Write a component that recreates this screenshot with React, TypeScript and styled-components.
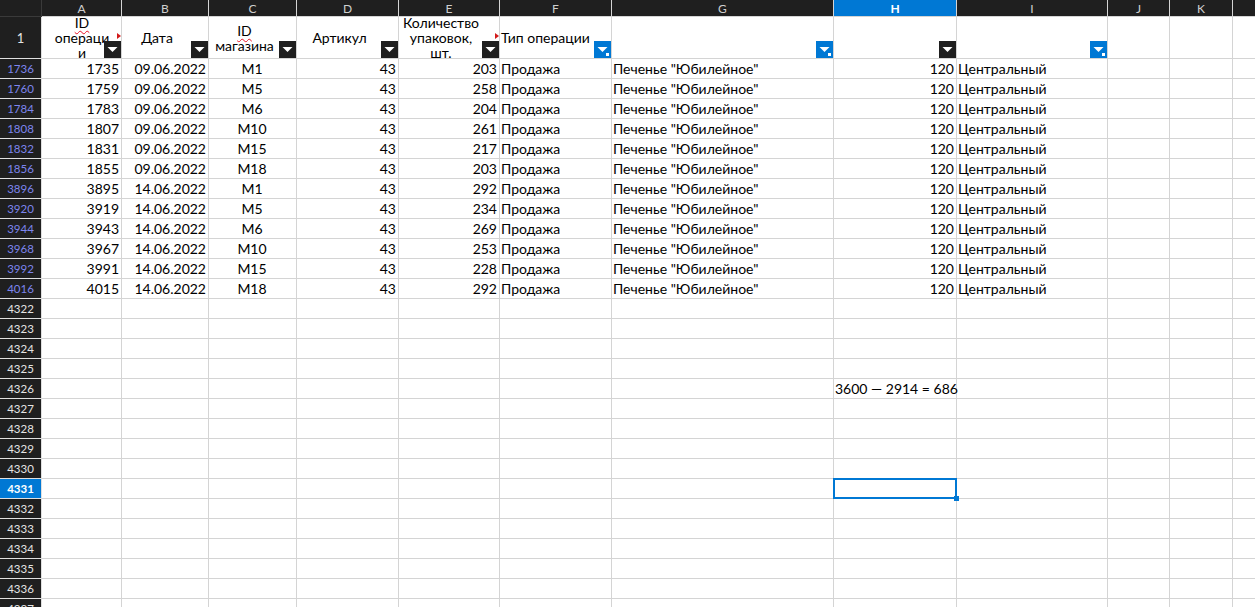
import React from 'react';
import styled, { createGlobalStyle, css } from 'styled-components';

const COLS = '42px 80px 87px 88px 102px 101px 112px 222px 123px 151px 62px 63px 80px';
const LETTERS = ['A', 'B', 'C', 'D', 'E', 'F', 'G', 'H', 'I', 'J', 'K', ''];

type Align = 'left' | 'center' | 'right';

const data: [number, number, string, string, number][] = [
  [1736, 1735, '09.06.2022', 'М1', 203],
  [1760, 1759, '09.06.2022', 'М5', 258],
  [1784, 1783, '09.06.2022', 'М6', 204],
  [1808, 1807, '09.06.2022', 'М10', 261],
  [1832, 1831, '09.06.2022', 'М15', 217],
  [1856, 1855, '09.06.2022', 'М18', 203],
  [3896, 3895, '14.06.2022', 'М1', 292],
  [3920, 3919, '14.06.2022', 'М5', 234],
  [3944, 3943, '14.06.2022', 'М6', 269],
  [3968, 3967, '14.06.2022', 'М10', 253],
  [3992, 3991, '14.06.2022', 'М15', 228],
  [4016, 4015, '14.06.2022', 'М18', 292],
];

const emptyRows = Array.from({ length: 16 }, (_, i) => 4322 + i);

function App() {
  return (
    <>
      <GlobalStyle />
      <Sheet>
        <GridRow $h={17}>
          <Corner />
          {LETTERS.map((l) => (
            <ColHead key={l || 'L'} $active={l === 'H'}>
              {l}
            </ColHead>
          ))}
        </GridRow>

        <GridRow $h={42}>
          <RowHead $tone="plain" $big>
            1
          </RowHead>
          <HeadCell $pad={0}>
            <Label>
              <Spell>ID</Spell>
              <br />
              операци
              <br />и
            </Label>
            <Overflow />
            <FilterButton />
          </HeadCell>
          <HeadCell $pad={17}>
            <Label>Дата</Label>
            <FilterButton />
          </HeadCell>
          <HeadCell $pad={17}>
            <Label>
              <Spell>ID</Spell>
              <br />
              магазина
            </Label>
            <FilterButton />
          </HeadCell>
          <HeadCell $pad={17}>
            <Label>Артикул</Label>
            <FilterButton />
          </HeadCell>
          <HeadCell $pad={17}>
            <Label>
              Количество
              <br />
              упаковок,
              <br />
              шт.
            </Label>
            <Overflow />
            <FilterButton />
          </HeadCell>
          <HeadCell $pad={17} $align="left">
            <Label>Тип операции</Label>
            <FilterButton filtered />
          </HeadCell>
          <HeadCell $pad={17}>
            <FilterButton filtered />
          </HeadCell>
          <HeadCell $pad={17}>
            <FilterButton />
          </HeadCell>
          <HeadCell $pad={17}>
            <FilterButton filtered />
          </HeadCell>
          <HeadCell $pad={0} />
          <HeadCell $pad={0} />
          <HeadCell $pad={0} />
        </GridRow>

        {data.map(([row, id, date, shop, qty]) => (
          <GridRow key={row} $h={20}>
            <RowHead $tone="filtered">{row}</RowHead>
            <Cell $align="right">{id}</Cell>
            <Cell $align="right">{date}</Cell>
            <Cell $align="center">{shop}</Cell>
            <Cell $align="right">43</Cell>
            <Cell $align="right">{qty}</Cell>
            <Cell>Продажа</Cell>
            <Cell>Печенье "Юбилейное"</Cell>
            <Cell $align="right">120</Cell>
            <Cell>Центральный</Cell>
            <Cell />
            <Cell />
            <Cell />
          </GridRow>
        ))}

        {emptyRows.map((row) => (
          <GridRow key={row} $h={20}>
            <RowHead $tone={row === 4331 ? 'active' : 'plain'}>{row}</RowHead>
            {LETTERS.map((l) => (
              <Cell key={l || 'L'} $selected={row === 4331 && l === 'H'}>
                {row === 4326 && l === 'H' ? '3600 — 2914 = 686' : ''}
              </Cell>
            ))}
          </GridRow>
        ))}
      </Sheet>
    </>
  );
}

function FilterButton({ filtered }: { filtered?: boolean }) {
  return (
    <Filter $filtered={filtered}>
      <svg width="17" height="17" viewBox="0 0 17 17">
        <polygon points="3.5,6 13.5,6 8.5,11" fill="#fff" />
        {filtered && <rect x="12" y="12" width="3" height="3" fill="#fff" />}
      </svg>
    </Filter>
  );
}

export default App;

const GlobalStyle = createGlobalStyle`
  html, body {
    margin: 0;
    background: #fff;
    overflow: hidden;
  }
  body {
    font-family: Lato, "Noto Sans", sans-serif;
  }
`;

const Sheet = styled.div`
  width: 1255px;
  height: 607px;
  overflow: hidden;
  background: #fff;
  color: #000;
  font-size: 14px;
`;

const GridRow = styled.div<{ $h: number }>`
  display: grid;
  grid-template-columns: ${COLS};
  grid-template-rows: ${(p) => p.$h}px;
  height: ${(p) => p.$h}px;
  & > * {
    min-height: 0;
    min-width: 0;
    box-sizing: border-box;
  }
`;

const Corner = styled.div`
  background: #1f1f1f;
  border-right: 1px solid #3a3a3a;
  border-bottom: 1px solid #3a3a3a;
`;

const ColHead = styled.div<{ $active?: boolean }>`
  display: flex;
  align-items: center;
  justify-content: center;
  background: ${(p) => (p.$active ? '#0078d4' : '#1f1f1f')};
  color: ${(p) => (p.$active ? '#fff' : '#cfcfcf')};
  font-weight: ${(p) => (p.$active ? 700 : 400)};
  font-size: 12px;
  border-right: 1px solid #d4d4d4;
  border-bottom: 1px solid #d4d4d4;
`;

const toneColor = {
  filtered: '#7d85ee',
  plain: '#e4e4e4',
  active: '#fff',
};

const RowHead = styled.div<{ $tone: 'filtered' | 'plain' | 'active'; $big?: boolean }>`
  display: flex;
  align-items: center;
  justify-content: center;
  font-size: ${(p) => (p.$big ? 13 : 11.5)}px;
  background: ${(p) => (p.$tone === 'active' ? '#0078d4' : '#1f1f1f')};
  color: ${(p) => toneColor[p.$tone]};
  font-weight: ${(p) => (p.$tone === 'active' ? 700 : 400)};
  border-right: 1px solid #e0e0e0;
  border-bottom: 1px solid #e0e0e0;
`;

const Cell = styled.div<{ $align?: Align; $selected?: boolean }>`
  position: relative;
  display: flex;
  align-items: center;
  justify-content: ${(p) =>
    p.$align === 'right' ? 'flex-end' : p.$align === 'center' ? 'center' : 'flex-start'};
  padding: 0 2px 0 1px;
  white-space: nowrap;
  border-right: 1px solid #d4d4d4;
  border-bottom: 1px solid #d4d4d4;
  ${(p) =>
    p.$selected &&
    css`
      &::after {
        content: '';
        position: absolute;
        top: -1px;
        left: -1px;
        right: -1px;
        bottom: -1px;
        border: 2px solid #0078d4;
      }
      &::before {
        content: '';
        position: absolute;
        right: -3px;
        bottom: -3px;
        width: 5px;
        height: 5px;
        background: #0078d4;
        z-index: 1;
      }
    `}
`;

const HeadCell = styled.div<{ $pad: number; $align?: Align }>`
  position: relative;
  display: flex;
  align-items: center;
  justify-content: ${(p) => (p.$align === 'left' ? 'flex-start' : 'center')};
  padding: 0 ${(p) => p.$pad}px 0 1px;
  text-align: ${(p) => (p.$align === 'left' ? 'left' : 'center')};
  border-right: 1px solid #d4d4d4;
  border-bottom: 1px solid #d4d4d4;
`;

const Label = styled.div`
  line-height: 15px;
  white-space: nowrap;
`;

const Spell = styled.span`
  text-decoration: underline wavy #e81123;
  text-decoration-thickness: 1px;
  text-underline-offset: 2px;
`;

const Overflow = styled.span`
  position: absolute;
  right: 0;
  top: 16px;
  width: 0;
  height: 0;
  border-left: 4px solid #d21a1a;
  border-top: 3.5px solid transparent;
  border-bottom: 3.5px solid transparent;
`;

const Filter = styled.span<{ $filtered?: boolean }>`
  position: absolute;
  right: 0;
  bottom: 0;
  width: 17px;
  height: 17px;
  display: block;
  background: ${(p) => (p.$filtered ? '#0078d4' : '#1f1f1f')};
  svg {
    display: block;
  }
`;
